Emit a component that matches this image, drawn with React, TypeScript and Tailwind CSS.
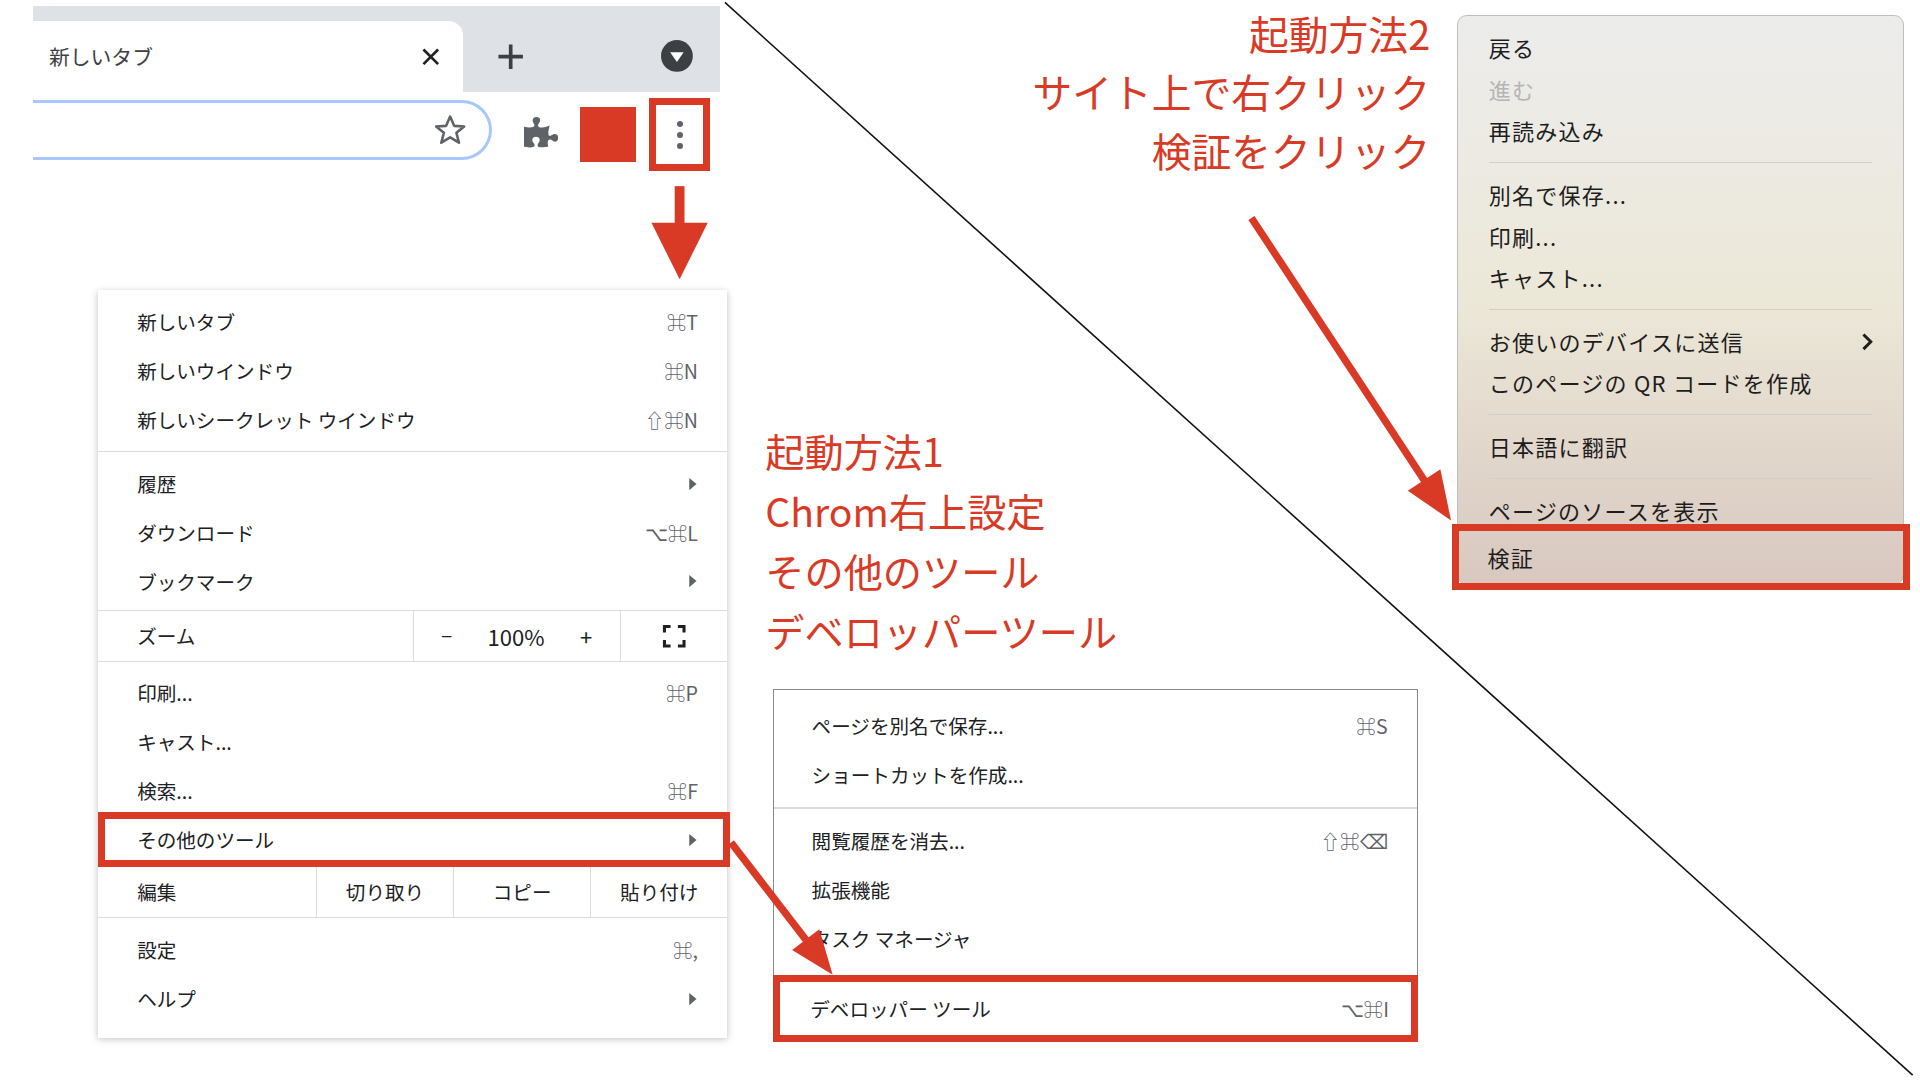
import React from "react";
import { FaPuzzlePiece } from "react-icons/fa";

const F = { fontFamily: '"Noto Sans CJK JP", "Noto Sans", sans-serif' };

function Arrow() {
  return (
    <svg className="w-[8px] h-[10px]" viewBox="0 0 8 10"><path d="M1 0 L7 5 L1 10 Z" fill="#5f6368" /></svg>
  );
}

function Row({ label, sc, arrow, hl }: { label: string; sc?: string; arrow?: boolean; hl?: boolean }) {
  return (
    <div className="relative h-[40px] flex items-center justify-between pl-[32px] pr-[24px] text-[16px] text-[#202124]">
      <span>{label}</span>
      {sc && <span className="text-[#5f6368] text-[16px]">{sc}</span>}
      {arrow && <Arrow />}
      {hl && <div className="absolute left-0 right-[-2px] top-[-3px] bottom-[-2px] border-[6px] border-[#d93a26]" />}
    </div>
  );
}

function Sep() {
  return <div className="h-[12px] flex items-center"><div className="h-px w-full bg-[#dadce0]" /></div>;
}

function SubRow({ label, sc }: { label: string; sc?: string }) {
  return (
    <div className="h-[40px] flex items-center justify-between pl-[31px] pr-[24px] text-[16px] text-[#202124]">
      <span>{label}</span>
      {sc && <span className="text-[#5f6368]">{sc}</span>}
    </div>
  );
}

function CRow({ label, gray, chev }: { label: string; gray?: boolean; chev?: boolean }) {
  return (
    <div className={"h-[34px] flex items-center justify-between pl-[25px] pr-[24px] text-[18px] tracking-[1px] " + (gray ? "text-[#b5b5b5]" : "text-[#1d1d1d]")}>
      <span>{label}</span>
      {chev && (
        <svg width="10" height="16" viewBox="0 0 10 16"><path d="M2 2 L8 8 L2 14" fill="none" stroke="#1d1d1d" strokeWidth="2.4" /></svg>
      )}
    </div>
  );
}
function CSep() {
  return <div className="h-[18px] flex items-center pl-[25px] pr-[25px]"><div className="h-px w-full bg-[#cfcfcf]" /></div>;
}

export default function App() {
  return (
    <div className="w-[1920px] h-[1080px] bg-white overflow-hidden" style={F}>
      <div className="relative w-[1568px] h-[882px] [zoom:1.2245]">
        {/* browser chrome */}
        <div className="absolute left-[27px] top-[5px] w-[561px] h-[70px] bg-[#dee1e6] flex items-end">
          <div className="w-[351px] h-[58px] bg-white rounded-tr-[12px] flex items-center justify-between pl-[13px] pr-[18px]">
            <span className="text-[17px] text-[#3c4043]">新しいタブ</span>
            <svg width="16" height="16" viewBox="0 0 16 16"><path d="M2 2 L14 14 M14 2 L2 14" stroke="#202124" strokeWidth="2.2" /></svg>
          </div>
          <div className="flex-1 h-[58px] flex items-center justify-between pl-[27px] pr-[22px]">
            <svg width="24" height="24" viewBox="0 0 24 24"><path d="M12 2 V22 M2 12 H22" stroke="#3c4043" strokeWidth="3" /></svg>
            <svg width="26" height="26" viewBox="0 0 26 26"><circle cx="13" cy="13" r="13" fill="#3c4043" /><path d="M7.5 10 H18.5 L13 18 Z" fill="white" /></svg>
          </div>
        </div>
        <div className="absolute left-[27px] top-[82px] w-[375px] h-[49px] border-[3px] border-l-0 border-[#a8c7fa] rounded-r-full flex items-center justify-end pr-[18px]">
          <svg width="28" height="28" viewBox="0 0 24 24"><path d="M12 2.5 L14.8 9 L21.8 9.4 L16.4 13.9 L18.2 20.8 L12 17 L5.8 20.8 L7.6 13.9 L2.2 9.4 L9.2 9 Z" fill="none" stroke="#5f6368" strokeWidth="1.8" strokeLinejoin="round" /></svg>
        </div>
        <div className="absolute left-[428px] top-[94px] text-[#5f6368]"><FaPuzzlePiece size={28} /></div>
        <div className="absolute left-[474px] top-[87px] w-[45px] h-[45px] bg-[#d93a26]" />
        <div className="absolute left-[530px] top-[80px] w-[50px] h-[60px] border-[6px] border-[#d93a26] flex flex-col items-center justify-center gap-[4px]">
          <div className="w-[5px] h-[5px] rounded-full bg-[#5f6368]" />
          <div className="w-[5px] h-[5px] rounded-full bg-[#5f6368]" />
          <div className="w-[5px] h-[5px] rounded-full bg-[#5f6368]" />
        </div>

        {/* left chrome menu */}
        <div className="absolute left-[80px] top-[237px] w-[514px] h-[611px] bg-white pt-[6px] shadow-[0_2px_6px_rgba(0,0,0,0.25)]">
          <Row label="新しいタブ" sc="⌘T" />
          <Row label="新しいウインドウ" sc="⌘N" />
          <Row label="新しいシークレット ウインドウ" sc="⇧⌘N" />
          <Sep />
          <Row label="履歴" arrow />
          <Row label="ダウンロード" sc="⌥⌘L" />
          <Row label="ブックマーク" arrow />
          <div className="h-[43px] mt-[3px] border-y border-[#dadce0] flex text-[16px] text-[#202124]">
            <div className="w-[257px] flex items-center pl-[32px]">ズーム</div>
            <div className="w-[170px] border-x border-[#dadce0] flex items-center justify-around px-[8px]">
              <span>−</span><span className="text-[18px]">100%</span><span className="text-[18px]">+</span>
            </div>
            <div className="flex-1 flex items-center justify-center">
              <svg width="20" height="20" viewBox="0 0 20 20"><path d="M2 7 V2 H7 M13 2 H18 V7 M18 13 V18 H13 M7 18 H2 V13" fill="none" stroke="#202124" strokeWidth="2.5" /></svg>
            </div>
          </div>
          <div className="h-[5px]" />
          <Row label="印刷..." sc="⌘P" />
          <Row label="キャスト..." />
          <Row label="検索..." sc="⌘F" />
          <Row label="その他のツール" arrow hl />
          <div className="h-[42px] mt-[2px] border-b border-[#dadce0] flex text-[16px] text-[#202124]">
            <div className="w-[178px] flex items-center pl-[32px]">編集</div>
            <div className="w-[112px] border-l border-[#dadce0] flex items-center justify-center">切り取り</div>
            <div className="w-[112px] border-l border-[#dadce0] flex items-center justify-center">コピー</div>
            <div className="flex-1 border-l border-[#dadce0] flex items-center justify-center">貼り付け</div>
          </div>
          <div className="h-[6px]" />
          <Row label="設定" sc="⌘," />
          <Row label="ヘルプ" arrow />
        </div>

        {/* annotation 1 */}
        <div className="absolute left-[625px] top-[343px] text-[#d93a26] text-[32px] leading-[49px]">
          <div>起動方法1</div>
          <div>Chrom右上設定</div>
          <div>その他のツール</div>
          <div>デベロッパーツール</div>
        </div>

        {/* submenu */}
        <div className="absolute left-[631px] top-[563px] w-[527px] h-[287px] border border-[#8a8a8a] bg-white pt-[9px]">
          <SubRow label="ページを別名で保存..." sc="⌘S" />
          <SubRow label="ショートカットを作成..." />
          <div className="h-[14px] flex items-center"><div className="h-px w-full bg-[#dadce0]" /></div>
          <SubRow label="閲覧履歴を消去..." sc="⇧⌘⌫" />
          <SubRow label="拡張機能" />
          <SubRow label="タスク マネージャ" />
        </div>
        <div className="absolute left-[631px] top-[796px] w-[527px] h-[55px] border-[6px] border-[#d93a26] bg-white flex items-center justify-between pl-[25px] pr-[18px] text-[16px] text-[#202124]">
          <span>デベロッパー ツール</span><span className="text-[#5f6368]">⌥⌘I</span>
        </div>

        {/* annotation 2 */}
        <div className="absolute right-[400px] top-[3px] text-right text-[#d93a26] text-[32.5px] leading-[48px]">
          <div>起動方法2</div>
          <div>サイト上で右クリック</div>
          <div>検証をクリック</div>
        </div>

        {/* context menu */}
        <div className="absolute left-[1190px] top-[12px] w-[365px] h-[466px] rounded-[8px] border border-[#bdbdbd] bg-gradient-to-b from-[#ececec] via-[#ece8d8] to-[#d8c8c0] pt-[9px]">
          <CRow label="戻る" />
          <CRow label="進む" gray />
          <CRow label="再読み込み" />
          <CSep />
          <CRow label="別名で保存..." />
          <CRow label="印刷..." />
          <CRow label="キャスト..." />
          <CSep />
          <CRow label="お使いのデバイスに送信" chev />
          <CRow label="このページの QR コードを作成" />
          <CSep />
          <CRow label="日本語に翻訳" />
          <CSep />
          <CRow label="ページのソースを表示" />
        </div>
        <div className="absolute left-[1186px] top-[428px] w-[374px] h-[54px] border-[6px] border-[#d93a26] flex items-center pl-[23px] text-[18px] text-[#1d1d1d] tracking-[1px]">検証</div>

        {/* overlay drawing */}
        <svg className="absolute left-0 top-0 pointer-events-none" width="1568" height="882" viewBox="0 0 1568 882">
          <line x1="592" y1="2" x2="1562" y2="878" stroke="#111" strokeWidth="1.3" />
          <rect x="551" y="152" width="8" height="32" fill="#d93a26" />
          <polygon points="532,182 578,182 555,228" fill="#d93a26" />
          <line x1="597" y1="688" x2="660" y2="770" stroke="#d93a26" strokeWidth="6" />
          <polygon points="680,796 646.9,775.9 669.1,758.9" fill="#d93a26" />
          <line x1="1022" y1="178" x2="1165" y2="395" stroke="#d93a26" strokeWidth="6" />
          <polygon points="1185,425 1149.7,400.8 1176.3,383.2" fill="#d93a26" />
        </svg>
      </div>
    </div>
  );
}
